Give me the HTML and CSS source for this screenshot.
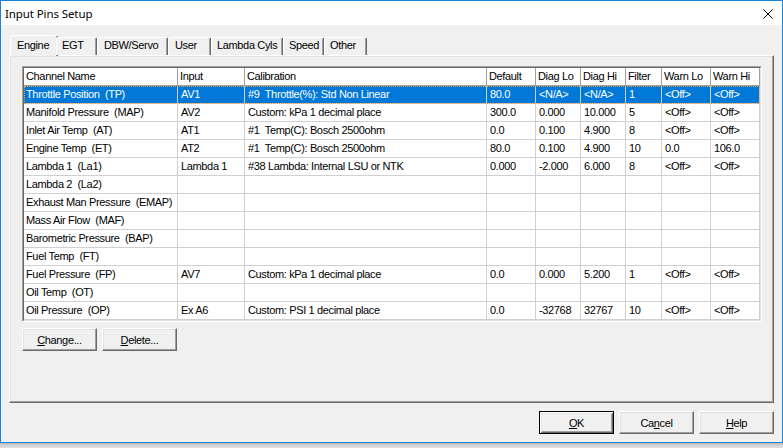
FILE: index.html
```html
<!DOCTYPE html>
<html>
<head>
<meta charset="utf-8">
<title>Input Pins Setup</title>
<link rel="stylesheet" href="styles.css">
</head>
<body>
<div class="window">
  <div class="titlebar">
    <span class="title">Input Pins Setup</span>
    <svg class="close" width="10" height="10" viewBox="0 0 10 10"><path d="M0.5 0.5 L9.5 9.5 M9.5 0.5 L0.5 9.5" stroke="#000" stroke-width="1" fill="none"/></svg>
  </div>
  <div class="client">
    <div class="tabs">
      <div class="tab sel t1">Engine</div>
      <div class="tab t2">EGT</div>
      <div class="tab t3">DBW/Servo</div>
      <div class="tab t4">User</div>
      <div class="tab t5">Lambda Cyls</div>
      <div class="tab t6">Speed</div>
      <div class="tab t7">Other</div>
    </div>
    <div class="panel">
      <div class="list">
        <div class="list-in">
          <div class="hdr">
            <div class="cell c1">Channel Name</div>
            <div class="cell c2">Input</div>
            <div class="cell c3">Calibration</div>
            <div class="cell c4">Default</div>
            <div class="cell c5">Diag Lo</div>
            <div class="cell c6">Diag Hi</div>
            <div class="cell c7">Filter</div>
            <div class="cell c8">Warn Lo</div>
            <div class="cell c9">Warn Hi</div>
          </div>
          <div class="row sel">
            <div class="cell c1">Throttle Position&nbsp; (TP)</div>
            <div class="cell c2">AV1</div>
            <div class="cell c3">#9&nbsp; Throttle(%): Std Non Linear</div>
            <div class="cell c4">80.0</div>
            <div class="cell c5">&lt;N/A&gt;</div>
            <div class="cell c6">&lt;N/A&gt;</div>
            <div class="cell c7">1</div>
            <div class="cell c8">&lt;Off&gt;</div>
            <div class="cell c9">&lt;Off&gt;</div>
          </div>
          <div class="row">
            <div class="cell c1">Manifold Pressure&nbsp; (MAP)</div>
            <div class="cell c2">AV2</div>
            <div class="cell c3">Custom: kPa 1 decimal place</div>
            <div class="cell c4">300.0</div>
            <div class="cell c5">0.000</div>
            <div class="cell c6">10.000</div>
            <div class="cell c7">5</div>
            <div class="cell c8">&lt;Off&gt;</div>
            <div class="cell c9">&lt;Off&gt;</div>
          </div>
          <div class="row">
            <div class="cell c1">Inlet Air Temp&nbsp; (AT)</div>
            <div class="cell c2">AT1</div>
            <div class="cell c3">#1&nbsp; Temp(C): Bosch 2500ohm</div>
            <div class="cell c4">0.0</div>
            <div class="cell c5">0.100</div>
            <div class="cell c6">4.900</div>
            <div class="cell c7">8</div>
            <div class="cell c8">&lt;Off&gt;</div>
            <div class="cell c9">&lt;Off&gt;</div>
          </div>
          <div class="row">
            <div class="cell c1">Engine Temp&nbsp; (ET)</div>
            <div class="cell c2">AT2</div>
            <div class="cell c3">#1&nbsp; Temp(C): Bosch 2500ohm</div>
            <div class="cell c4">80.0</div>
            <div class="cell c5">0.100</div>
            <div class="cell c6">4.900</div>
            <div class="cell c7">10</div>
            <div class="cell c8">0.0</div>
            <div class="cell c9">106.0</div>
          </div>
          <div class="row">
            <div class="cell c1">Lambda 1&nbsp; (La1)</div>
            <div class="cell c2">Lambda 1</div>
            <div class="cell c3">#38 Lambda: Internal LSU or NTK</div>
            <div class="cell c4">0.000</div>
            <div class="cell c5">-2.000</div>
            <div class="cell c6">6.000</div>
            <div class="cell c7">8</div>
            <div class="cell c8">&lt;Off&gt;</div>
            <div class="cell c9">&lt;Off&gt;</div>
          </div>
          <div class="row">
            <div class="cell c1">Lambda 2&nbsp; (La2)</div>
            <div class="cell c2"></div><div class="cell c3"></div><div class="cell c4"></div><div class="cell c5"></div><div class="cell c6"></div><div class="cell c7"></div><div class="cell c8"></div><div class="cell c9"></div>
          </div>
          <div class="row">
            <div class="cell c1">Exhaust Man Pressure&nbsp; (EMAP)</div>
            <div class="cell c2"></div><div class="cell c3"></div><div class="cell c4"></div><div class="cell c5"></div><div class="cell c6"></div><div class="cell c7"></div><div class="cell c8"></div><div class="cell c9"></div>
          </div>
          <div class="row">
            <div class="cell c1">Mass Air Flow&nbsp; (MAF)</div>
            <div class="cell c2"></div><div class="cell c3"></div><div class="cell c4"></div><div class="cell c5"></div><div class="cell c6"></div><div class="cell c7"></div><div class="cell c8"></div><div class="cell c9"></div>
          </div>
          <div class="row">
            <div class="cell c1">Barometric Pressure&nbsp; (BAP)</div>
            <div class="cell c2"></div><div class="cell c3"></div><div class="cell c4"></div><div class="cell c5"></div><div class="cell c6"></div><div class="cell c7"></div><div class="cell c8"></div><div class="cell c9"></div>
          </div>
          <div class="row">
            <div class="cell c1">Fuel Temp&nbsp; (FT)</div>
            <div class="cell c2"></div><div class="cell c3"></div><div class="cell c4"></div><div class="cell c5"></div><div class="cell c6"></div><div class="cell c7"></div><div class="cell c8"></div><div class="cell c9"></div>
          </div>
          <div class="row">
            <div class="cell c1">Fuel Pressure&nbsp; (FP)</div>
            <div class="cell c2">AV7</div>
            <div class="cell c3">Custom: kPa 1 decimal place</div>
            <div class="cell c4">0.0</div>
            <div class="cell c5">0.000</div>
            <div class="cell c6">5.200</div>
            <div class="cell c7">1</div>
            <div class="cell c8">&lt;Off&gt;</div>
            <div class="cell c9">&lt;Off&gt;</div>
          </div>
          <div class="row">
            <div class="cell c1">Oil Temp&nbsp; (OT)</div>
            <div class="cell c2"></div><div class="cell c3"></div><div class="cell c4"></div><div class="cell c5"></div><div class="cell c6"></div><div class="cell c7"></div><div class="cell c8"></div><div class="cell c9"></div>
          </div>
          <div class="row">
            <div class="cell c1">Oil Pressure&nbsp; (OP)</div>
            <div class="cell c2">Ex A6</div>
            <div class="cell c3">Custom: PSI 1 decimal place</div>
            <div class="cell c4">0.0</div>
            <div class="cell c5">-32768</div>
            <div class="cell c6">32767</div>
            <div class="cell c7">10</div>
            <div class="cell c8">&lt;Off&gt;</div>
            <div class="cell c9">&lt;Off&gt;</div>
          </div>
        </div>
      </div>
      <div class="btnrow">
        <button class="btn"><u>C</u>hange...</button>
        <button class="btn"><u>D</u>elete...</button>
      </div>
    </div>
    <div class="dlgbtns">
      <button class="btn def"><u>O</u>K</button>
      <button class="btn">Ca<u>n</u>cel</button>
      <button class="btn"><u>H</u>elp</button>
    </div>
  </div>
</div>
</body>
</html>
```
FILE: styles.css
```css
* { box-sizing: border-box; }
html, body { margin: 0; padding: 0; }
body {
  width: 783px;
  height: 448px;
  overflow: hidden;
  background: linear-gradient(to bottom, #b9b9b9 443px, #cfcfcf 445px, #e2e2e2 448px);
  font-family: "Liberation Sans", Arial, sans-serif;
  font-size: 11px;
  letter-spacing: -0.35px;
  color: #000;
}
.window {
  width: 783px;
  height: 443px;
  border: 1px solid #1883d7;
  background: #f0f0f0;
  display: flex;
  flex-direction: column;
}
.titlebar {
  height: 24px;
  background: #fff;
  display: flex;
  align-items: center;
  padding: 1px 9px 0 4px;
  font-family: "Noto Sans", "Open Sans", sans-serif;
  font-size: 11.5px;
  letter-spacing: -0.1px;
}
.title { flex: 1; }
.close { display: block; }
.client {
  flex: 1;
  display: flex;
  flex-direction: column;
  padding: 10px 8px 8px 8px;
}
.tabs {
  display: flex;
  align-items: flex-end;
  height: 20px;
  padding-left: 3px;
  position: relative;
  z-index: 1;
}
.tab {
  height: 18px;
  border: 1px solid;
  border-bottom: 0;
  border-color: #fff #696969 transparent #fff;
  border-radius: 2px 2px 0 0;
  box-shadow: inset -1px 0 #a0a0a0;
  background: #f0f0f0;
  padding-left: 5px;
  line-height: 15px;
  white-space: nowrap;
}
.tab.sel {
  height: 21px;
  margin: 0 -2px -1px -2px;
  padding-left: 6px;
  padding-top: 1px;
  line-height: 17px;
}
.t1 { width: 44px; }
.t1.sel { width: 48px; }
.t2 { width: 41px; padding-left: 5px; }
.t3 { width: 71px; padding-left: 6px; }
.t4 { width: 43px; padding-left: 6px; }
.t5 { width: 72px; padding-left: 5px; }
.t6 { width: 41px; padding-left: 5px; }
.t7 { width: 43px; padding-left: 5px; }
.panel {
  height: 348px;
  border: 1px solid;
  border-color: #fff #696969 #696969 #fff;
  box-shadow: inset -1px -1px #a0a0a0, inset 1px 1px #e3e3e3;
  padding: 10px 12px 0 12px;
}
.list {
  width: 740px;
  border: 1px solid;
  border-color: #a0a0a0 #fff #fff #a0a0a0;
}
.list-in {
  height: 254px;
  border: 1px solid;
  border-color: #696969 #e3e3e3 #e3e3e3 #696969;
  background: #fff;
}
.hdr, .row {
  display: flex;
  height: 18px;
}
.cell {
  height: 18px;
  white-space: nowrap;
  overflow: hidden;
  line-height: 17px;
  padding-left: 3px;
}
.hdr .cell {
  background: #fff;
  border-right: 1px solid #a0a0a0;
  border-bottom: 1px solid #a0a0a0;
  padding-left: 2px;
}
.row .cell {
  border-right: 1px solid #d0d0d0;
  border-bottom: 1px solid #d0d0d0;
}
.row .c1 { padding-left: 2px; }
.row.sel {
  background: #0078d7;
  color: #fff;
  outline: 1px dotted #f0a050;
  outline-offset: -1px;
}
.c1 { width: 154px; }
.c2 { width: 67px; }
.c3 { width: 242px; }
.c4 { width: 49px; }
.c5 { width: 45px; }
.c6 { width: 45px; }
.c7 { width: 36px; }
.c8 { width: 49px; }
.c9 { width: 49px; }
.btnrow {
  display: flex;
  gap: 5px;
  margin-top: 6px;
}
.btn {
  width: 75px;
  height: 23px;
  padding: 0;
  margin: 0;
  border: 1px solid;
  border-color: #fff #696969 #696969 #fff;
  box-shadow: inset -1px -1px #a0a0a0, inset 1px 1px #e3e3e3;
  background: #f0f0f0;
  font-family: "Liberation Sans", Arial, sans-serif;
  font-size: 11px;
  letter-spacing: -0.35px;
  color: #000;
  text-align: center;
}
.btn.def {
  border: 1px solid #000;
  box-shadow: inset 1px 1px #fff, inset -1px -1px #696969, inset 2px 2px #e3e3e3, inset -2px -2px #a0a0a0;
}
.dlgbtns {
  display: flex;
  justify-content: flex-end;
  gap: 5px;
  margin-top: 8px;
}
```
